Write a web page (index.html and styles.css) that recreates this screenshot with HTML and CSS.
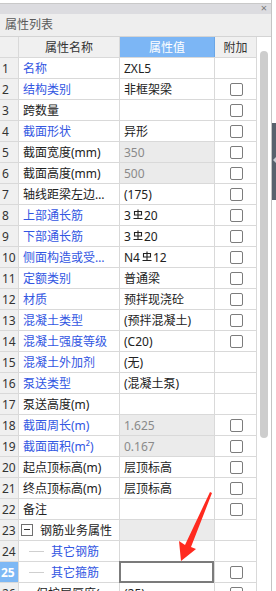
FILE: index.html
```html
<!doctype html>
<html lang="zh-CN">
<head>
	<meta charset="UTF-8">
	<title>属性列表</title>
	<link rel="stylesheet" href="styles.css">
</head>
<body>
	<div class="panel">
		<div class="topbar"><span class="close">×</span></div>
		<div class="title">属性列表</div>
		<div class="content">
			<div class="grid">
				<div class="row head">
					<div class="c num"></div>
					<div class="c name">属性名称</div>
					<div class="c val on">属性值</div>
					<div class="c add">附加</div>
				</div>
				<div class="row">
					<div class="c num">1</div>
					<div class="c name blue">名称</div>
					<div class="c val">ZXL5</div>
					<div class="c add"></div>
				</div>
				<div class="row">
					<div class="c num">2</div>
					<div class="c name blue">结构类别</div>
					<div class="c val">非框架梁</div>
					<div class="c add"><i class="cb"></i></div>
				</div>
				<div class="row">
					<div class="c num">3</div>
					<div class="c name">跨数量</div>
					<div class="c val"></div>
					<div class="c add"><i class="cb"></i></div>
				</div>
				<div class="row">
					<div class="c num">4</div>
					<div class="c name blue">截面形状</div>
					<div class="c val">异形</div>
					<div class="c add"><i class="cb"></i></div>
				</div>
				<div class="row">
					<div class="c num">5</div>
					<div class="c name">截面宽度(mm)</div>
					<div class="c val gray">350</div>
					<div class="c add"><i class="cb"></i></div>
				</div>
				<div class="row">
					<div class="c num">6</div>
					<div class="c name">截面高度(mm)</div>
					<div class="c val gray">500</div>
					<div class="c add"><i class="cb"></i></div>
				</div>
				<div class="row">
					<div class="c num">7</div>
					<div class="c name"><span class="cut">轴线距梁左边线距离(mm)</span></div>
					<div class="c val">(175)</div>
					<div class="c add"><i class="cb"></i></div>
				</div>
				<div class="row">
					<div class="c num">8</div>
					<div class="c name blue">上部通长筋</div>
					<div class="c val">3<svg class="bar" viewBox="0 0 10 10"><path d="M5 0.5V9.5M1.5 2.5h7v3.5h-7zM0.5 9.5h9"/></svg>20</div>
					<div class="c add"><i class="cb"></i></div>
				</div>
				<div class="row">
					<div class="c num">9</div>
					<div class="c name blue">下部通长筋</div>
					<div class="c val">3<svg class="bar" viewBox="0 0 10 10"><path d="M5 0.5V9.5M1.5 2.5h7v3.5h-7zM0.5 9.5h9"/></svg>20</div>
					<div class="c add"><i class="cb"></i></div>
				</div>
				<div class="row">
					<div class="c num">10</div>
					<div class="c name blue"><span class="cut">侧面构造或受扭筋(总配筋值)</span></div>
					<div class="c val">N4<svg class="bar" viewBox="0 0 10 10"><path d="M5 0.5V9.5M1.5 2.5h7v3.5h-7zM0.5 9.5h9"/></svg>12</div>
					<div class="c add"><i class="cb"></i></div>
				</div>
				<div class="row">
					<div class="c num">11</div>
					<div class="c name blue">定额类别</div>
					<div class="c val">普通梁</div>
					<div class="c add"><i class="cb"></i></div>
				</div>
				<div class="row">
					<div class="c num">12</div>
					<div class="c name blue">材质</div>
					<div class="c val">预拌现浇砼</div>
					<div class="c add"><i class="cb"></i></div>
				</div>
				<div class="row">
					<div class="c num">13</div>
					<div class="c name blue">混凝土类型</div>
					<div class="c val">(预拌混凝土)</div>
					<div class="c add"><i class="cb"></i></div>
				</div>
				<div class="row">
					<div class="c num">14</div>
					<div class="c name blue">混凝土强度等级</div>
					<div class="c val">(C20)</div>
					<div class="c add"><i class="cb"></i></div>
				</div>
				<div class="row">
					<div class="c num">15</div>
					<div class="c name blue">混凝土外加剂</div>
					<div class="c val">(无)</div>
					<div class="c add"></div>
				</div>
				<div class="row">
					<div class="c num">16</div>
					<div class="c name blue">泵送类型</div>
					<div class="c val">(混凝土泵)</div>
					<div class="c add"></div>
				</div>
				<div class="row">
					<div class="c num">17</div>
					<div class="c name">泵送高度(m)</div>
					<div class="c val"></div>
					<div class="c add"></div>
				</div>
				<div class="row">
					<div class="c num">18</div>
					<div class="c name blue">截面周长(m)</div>
					<div class="c val gray">1.625</div>
					<div class="c add"><i class="cb"></i></div>
				</div>
				<div class="row">
					<div class="c num">19</div>
					<div class="c name blue">截面面积(m²)</div>
					<div class="c val gray">0.167</div>
					<div class="c add"><i class="cb"></i></div>
				</div>
				<div class="row">
					<div class="c num">20</div>
					<div class="c name">起点顶标高(m)</div>
					<div class="c val">层顶标高</div>
					<div class="c add"><i class="cb"></i></div>
				</div>
				<div class="row">
					<div class="c num">21</div>
					<div class="c name">终点顶标高(m)</div>
					<div class="c val">层顶标高</div>
					<div class="c add"><i class="cb"></i></div>
				</div>
				<div class="row">
					<div class="c num">22</div>
					<div class="c name">备注</div>
					<div class="c val"></div>
					<div class="c add"><i class="cb"></i></div>
				</div>
				<div class="row">
					<div class="c num">23</div>
					<div class="c name group"><i class="fold"></i>钢筋业务属性</div>
					<div class="c val gray"></div>
					<div class="c add"></div>
				</div>
				<div class="row">
					<div class="c num">24</div>
					<div class="c name blue sub"><i class="line"></i>其它钢筋</div>
					<div class="c val"></div>
					<div class="c add"></div>
				</div>
				<div class="row">
					<div class="c num sel">25</div>
					<div class="c name blue sub"><i class="line"></i>其它箍筋</div>
					<div class="c val edit"><span class="editor"></span></div>
					<div class="c add"><i class="cb"></i></div>
				</div>
				<div class="row">
					<div class="c num">26</div>
					<div class="c name sub"><i class="line"></i>保护层厚度(mm)</div>
					<div class="c val">(25)</div>
					<div class="c add"><i class="cb"></i></div>
				</div>
			</div>
			<div class="scroll"><div class="thumb"></div></div>
		</div>
	</div>

	<div class="side_tab"><i class="arrow"></i></div>

	<!-- 标注箭头 -->
	<svg class="mark" width="276" height="591" viewBox="0 0 276 591">
		<polygon points="210,492 212,493 191,547 196,549 181,561 179,541 185,545" fill="#ff2a1f"/>
	</svg>
</body>
</html>
```

FILE: styles.css
```css
*{
	margin: 0;
	padding: 0;
	box-sizing: border-box;
}
body{
	width: 276px;
	height: 591px;
	overflow: hidden;
	position: relative;
	background: #fff;
	font-family: "Noto Sans", "Noto Sans CJK SC", sans-serif;
	font-size: 12px;
	color: #222;
}
.panel{
	width: 272px;
	height: 591px;
	padding-top: 3px;
	border-right: 1px solid #c4c4c4;
	overflow: hidden;
	background: #fff;
}
.topbar{
	height: 11px;
	border-top: 1px solid #c9c9c9;
	background: #dcdce0;
	position: relative;
}
.close{
	position: absolute;
	right: 4px;
	top: -4px;
	font-size: 11px;
	color: #7a7a7a;
	line-height: 16px;
}
.title{
	height: 23px;
	line-height: 22px;
	padding-left: 5px;
	background: #eeeeee;
	border-bottom: 1px solid #d4d4d4;
	color: #5a5a5a;
	font-size: 12px;
}
.content{
	display: flex;
}
.grid{
	width: 257px;
	flex: none;
}
.row{
	display: flex;
	height: 21px;
	border-bottom: 1px solid #d9d9d9;
}
.c{
	display: flex;
	align-items: center;
	border-right: 1px solid #d9d9d9;
	white-space: nowrap;
	overflow: hidden;
}
.num{
	width: 19px;
	padding-left: 2px;
	background: #f0f0f0;
	color: #333;
}
.num.sel{
	background: #7db8f5;
	color: #fff;
	font-weight: bold;
	padding-left: 1px;
}
.name{
	width: 101px;
	padding-left: 4px;
	padding-right: 6px;
}
.val{
	width: 95px;
	padding-left: 4px;
}
.add{
	width: 42px;
	justify-content: center;
}
.head .c{
	background: #f0f0f0;
	justify-content: center;
	padding: 0;
	color: #333;
}
.head .val.on{
	background: #7cb6f5;
	border-right-color: #6aa6e6;
	color: #fff;
}
.blue{
	color: #3256e2;
}
.gray{
	background: #ebebeb;
	color: #8a8a8a;
}
.cut{
	overflow: hidden;
	text-overflow: ellipsis;
}
.bar{
	width: 10px;
	height: 10px;
	margin: 0 1px 3px 2px;
	fill: none;
	stroke: #222;
	stroke-width: 1.1;
}
.cb{
	display: block;
	width: 13px;
	height: 13px;
	margin-left: 1px;
	border: 1px solid #7c7c7c;
	border-radius: 2px;
	background: #fff;
}
.group .fold{
	display: block;
	width: 12px;
	height: 12px;
	margin: 0 7px 0 -2px;
	border: 1px solid #707070;
	position: relative;
	background: #fff;
}
.group .fold:after{
	content: "";
	position: absolute;
	left: 2px;
	top: 4px;
	width: 6px;
	height: 1px;
	background: #333;
}
.sub{
	padding-left: 10px;
}
.sub .line{
	display: block;
	width: 15px;
	height: 1px;
	margin-right: 7px;
	background: #cfcfcf;
}
.edit{
	position: relative;
	overflow: visible;
}
.editor{
	position: absolute;
	left: -1px;
	top: -1px;
	right: 0;
	bottom: -1px;
	border: 2px solid #7b7b7b;
}
.scroll{
	width: 14px;
	padding-top: 14px;
	padding-left: 3px;
}
.thumb{
	width: 8px;
	height: 387px;
	border-radius: 4px;
	background: #cdcdcd;
}
.side_tab{
	position: absolute;
	left: 272px;
	top: 123px;
	width: 8px;
	height: 77px;
	background: #58626d;
}
.arrow{
	position: absolute;
	left: 1px;
	top: 34px;
	width: 0;
	height: 0;
	border-top: 3px solid transparent;
	border-bottom: 3px solid transparent;
	border-right: 3px solid #c9ced4;
}
.mark{
	position: absolute;
	left: 0;
	top: 0;
	pointer-events: none;
}
```
